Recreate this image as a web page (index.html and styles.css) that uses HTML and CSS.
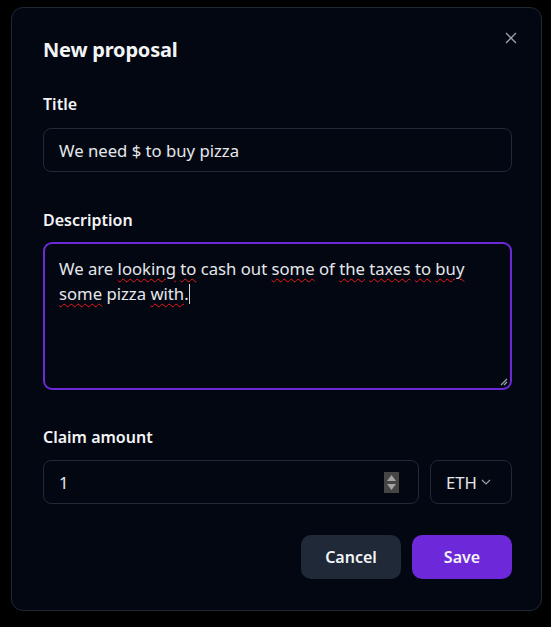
FILE: index.html
```html
<!DOCTYPE html>
<html lang="en">
<head>
<meta charset="utf-8">
<title>New proposal</title>
<link rel="stylesheet" href="styles.css">
</head>
<body>
<div class="dialog">
  <button class="close" aria-label="Close">
    <svg width="12" height="12" viewBox="0 0 12 12"><path d="M1 1 L11 11 M11 1 L1 11" stroke="#9ca3af" stroke-width="1.3" fill="none"/></svg>
  </button>
  <h2 class="heading">New proposal</h2>

  <div class="field field-title">
    <div class="label">Title</div>
    <div class="input">We need $ to buy pizza</div>
  </div>

  <div class="field field-desc">
    <div class="label">Description</div>
    <div class="textarea">
      <div class="ta-text">We are <span class="sp">looking</span> <span class="sp">to</span> cash out <span class="sp">some</span> of <span class="sp">the</span> <span class="sp">taxes</span> <span class="sp">to</span> <span class="sp">buy</span> <span class="sp">some</span> pizza <span class="sp">with</span>.<span class="caret"></span></div>
      <svg class="resize" width="8" height="8" viewBox="0 0 8 8"><path d="M7 1 L1 7 M7 4 L4 7" stroke="#9ca3af" stroke-width="1.2" fill="none"/></svg>
    </div>
  </div>

  <div class="field field-claim">
    <div class="label">Claim amount</div>
    <div class="row">
      <div class="input number">
        <span class="num-val">1</span>
        <span class="spinner">
          <svg width="15" height="21" viewBox="0 0 15 21"><rect width="15" height="21" fill="#454545"/><path d="M7.5 3 L12 9 L3 9 Z" fill="#a3a3a3"/><path d="M3 12 L12 12 L7.5 18 Z" fill="#a3a3a3"/></svg>
        </span>
      </div>
      <div class="select">
        <span>ETH</span>
        <svg width="10" height="6" viewBox="0 0 10 6"><path d="M1 1 L5 5 L9 1" stroke="#9ca3af" stroke-width="1.2" fill="none"/></svg>
      </div>
    </div>
  </div>

  <div class="actions">
    <button class="btn cancel">Cancel</button>
    <button class="btn save">Save</button>
  </div>
</div>
</body>
</html>
```

FILE: styles.css
```css
* { box-sizing: border-box; }
html, body { margin: 0; padding: 0; background: #000; }
body {
  font-family: "Noto Sans", "Open Sans", sans-serif;
  color: #f3f4f6;
  width: 551px;
  height: 627px;
  overflow: hidden;
}
.dialog {
  position: relative;
  margin: 7px 0 0 11px;
  width: 531px;
  height: 604px;
  background: #030712;
  border: 1px solid #1f2937;
  border-radius: 12px;
  padding: 28px 29px 0 31px;
}
.close {
  position: absolute;
  top: 24px;
  right: 24px;
  width: 12px;
  height: 12px;
  padding: 0;
  border: 0;
  background: none;
  display: flex;
}
.heading {
  margin: 0 0 28px;
  font-size: 20px;
  font-weight: 700;
  line-height: 28px;
  letter-spacing: -0.2px;
  color: #f3f4f6;
}
.field-title { margin-bottom: 36px; }
.field-desc { margin-bottom: 35px; }
.field-claim { margin-bottom: 31px; }
.label {
  font-size: 16px;
  font-weight: 600;
  line-height: 24px;
  margin-bottom: 12px;
}
.field-desc .label { margin-bottom: 10px; }
.field-claim .label { margin-bottom: 11px; }
.input {
  height: 44px;
  border: 1px solid #1f2937;
  border-radius: 8px;
  padding: 0 15px;
  display: flex;
  align-items: center;
  font-size: 16.7px;
  color: #e5e7eb;
}
.textarea {
  position: relative;
  height: 148px;
  border: 2px solid #6d28d9;
  border-radius: 9px;
  padding: 12px 14px;
  font-size: 16.7px;
  line-height: 25px;
  color: #e5e7eb;
}
.sp {
  text-decoration: underline wavy #f01818;
  text-decoration-thickness: 1.4px;
  text-underline-offset: 3px;
}
.caret {
  display: inline-block;
  width: 1px;
  height: 20px;
  background: #d1d5db;
  vertical-align: -4px;
}
.resize {
  position: absolute;
  right: 2px;
  bottom: 2px;
}
.row {
  display: flex;
  gap: 11px;
}
.number {
  flex: 1;
  justify-content: space-between;
  padding-right: 19px;
}
.spinner { display: flex; }
.select {
  width: 82px;
  height: 44px;
  border: 1px solid #1f2937;
  border-radius: 8px;
  display: flex;
  align-items: center;
  padding-left: 15px;
  gap: 4px;
  font-size: 16.7px;
  color: #e5e7eb;
}
.actions {
  display: flex;
  justify-content: flex-end;
  gap: 11px;
}
.btn {
  width: 100px;
  height: 44px;
  border: 0;
  border-radius: 10px;
  font-family: inherit;
  font-size: 16px;
  font-weight: 600;
  color: #f3f4f6;
}
.cancel { background: #1f2937; }
.save { background: #6d28d9; }
```
